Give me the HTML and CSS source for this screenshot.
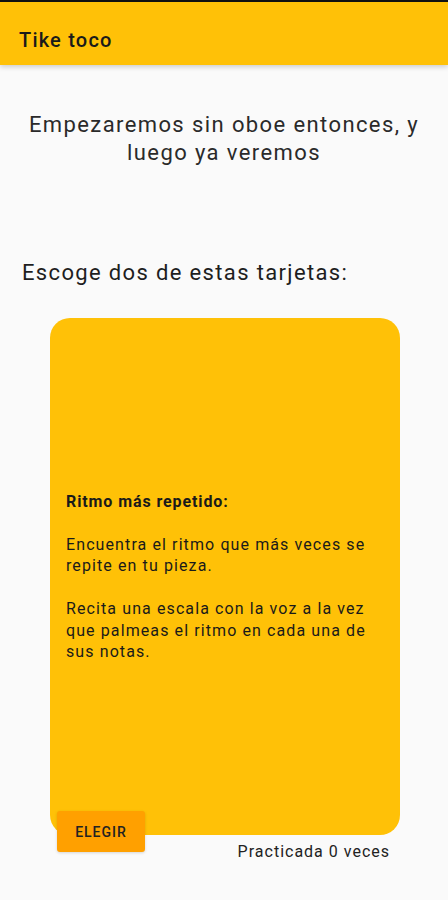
FILE: index.html
```html
<!DOCTYPE html>
<html lang="es">
<head>
<meta charset="utf-8">
<title>Tike toco</title>
<link rel="stylesheet" href="styles.css">
</head>
<body>
<div class="status"></div>
<header class="appbar"><span class="title">Tike toco</span></header>
<main class="content">
  <p class="intro">Empezaremos sin oboe entonces, y luego ya veremos</p>
  <p class="prompt">Escoge dos de estas tarjetas:</p>
  <section class="deck">
    <div class="card">
      <div class="card-text">
        <p class="card-title">Ritmo más repetido:</p>
        <p>Encuentra el ritmo que más veces se repite en tu pieza.</p>
        <p>Recita una escala con la voz a la vez que palmeas el ritmo en cada una de sus notas.</p>
      </div>
    </div>
    <div class="card-footer">
      <button class="choose">ELEGIR</button>
      <span class="count">Practicada 0 veces</span>
    </div>
  </section>
</main>
</body>
</html>
```
FILE: styles.css
```css
html, body {
  margin: 0;
  padding: 0;
  background: #fafafa;
  font-family: Roboto, "Noto Sans", sans-serif;
  color: #222;
}
.status {
  height: 2px;
  background: #111;
}
.appbar {
  height: 63px;
  background: #ffc107;
  display: flex;
  align-items: center;
  padding: 0 19px;
  box-shadow: 0 2px 5px rgba(0,0,0,0.18);
  position: relative;
  z-index: 1;
}
.title {
  font-size: 20px;
  font-weight: 500;
  letter-spacing: 1.2px;
  color: #1a1a1a;
  padding-top: 13px;
}
.content {
  display: flex;
  flex-direction: column;
}
.intro {
  margin: 46px 20px 0;
  font-size: 22px;
  line-height: 28px;
  letter-spacing: 1.4px;
  text-align: center;
  color: #2a2a2a;
}
.prompt {
  margin: 92px 22px 0;
  font-size: 22px;
  line-height: 28px;
  letter-spacing: 1.35px;
  color: #1e1e1e;
}
.deck {
  margin: 31px 48px 0 50px;
  display: flex;
  flex-direction: column;
}
.card {
  height: 517px;
  background: #ffc107;
  border-radius: 20px;
  display: flex;
  align-items: center;
  padding: 0 16px;
}
.card-text {
  font-size: 16px;
  line-height: 21.5px;
  letter-spacing: 1.1px;
  color: #1a1a1a;
}
.card-text p {
  margin: 0 0 21.5px;
}
.card-text p:last-child {
  margin-bottom: 0;
}
.card-title {
  font-weight: 700;
  letter-spacing: 0.9px;
}
.card-footer {
  margin: -24px 10px 0 7px;
  display: flex;
  justify-content: space-between;
  align-items: flex-start;
}
.choose {
  width: 88px;
  height: 41px;
  background: #ffa000;
  border: none;
  border-radius: 3px;
  box-shadow: 0 1px 3px rgba(0,0,0,0.15);
  font-family: Roboto, "Noto Sans", sans-serif;
  font-size: 14px;
  font-weight: 500;
  letter-spacing: 1px;
  color: #222;
  padding: 0;
}
.count {
  margin-top: 31px;
  font-size: 16px;
  line-height: 20px;
  letter-spacing: 1px;
  color: #222;
}
```
